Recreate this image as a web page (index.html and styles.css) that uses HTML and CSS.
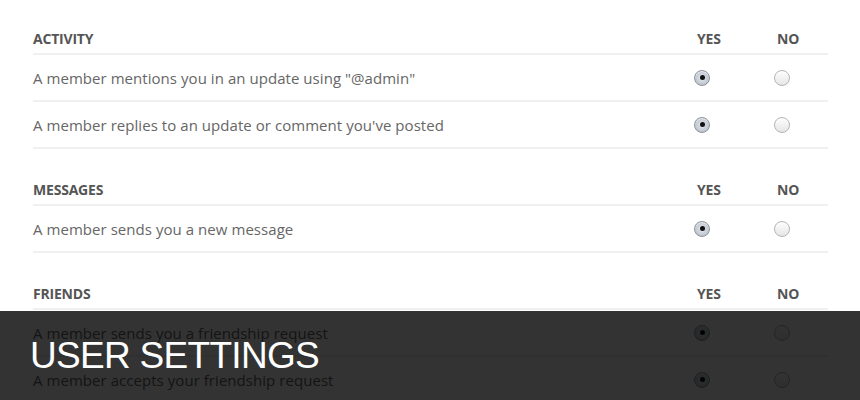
FILE: index.html
```html
<!DOCTYPE html>
<html>
<head>
<meta charset="utf-8">
<link rel="stylesheet" href="styles.css">
</head>
<body>
<div class="page">
  <section class="group">
    <div class="row head"><div class="label">Activity</div><div class="col">Yes</div><div class="col">No</div></div>
    <div class="row"><div class="label">A member mentions you in an update using "@admin"</div><div class="cell"><span class="radio on"></span></div><div class="cell"><span class="radio"></span></div></div>
    <div class="row"><div class="label">A member replies to an update or comment you've posted</div><div class="cell"><span class="radio on"></span></div><div class="cell"><span class="radio"></span></div></div>
  </section>
  <section class="group">
    <div class="row head"><div class="label">Messages</div><div class="col">Yes</div><div class="col">No</div></div>
    <div class="row"><div class="label">A member sends you a new message</div><div class="cell"><span class="radio on"></span></div><div class="cell"><span class="radio"></span></div></div>
  </section>
  <section class="group">
    <div class="row head"><div class="label">Friends</div><div class="col">Yes</div><div class="col">No</div></div>
    <div class="row"><div class="label">A member sends you a friendship request</div><div class="cell"><span class="radio on"></span></div><div class="cell"><span class="radio"></span></div></div>
    <div class="row"><div class="label">A member accepts your friendship request</div><div class="cell"><span class="radio on"></span></div><div class="cell"><span class="radio"></span></div></div>
  </section>
</div>
<div class="caption">USER SETTINGS</div>
</body>
</html>
```
FILE: styles.css
```css
html, body {
  margin: 0;
  padding: 0;
  background: #fff;
  width: 860px;
  height: 400px;
  overflow: hidden;
}
body {
  position: relative;
  font-family: "Open Sans", "DejaVu Sans", sans-serif;
}
.page {
  padding: 22px 0 0 33px;
  width: 795px;
  display: flex;
  flex-direction: column;
  gap: 24px;
}
.row {
  display: grid;
  grid-template-columns: 661px 80px 54px;
  align-items: center;
  height: 47px;
  border-bottom: 2px solid #f0f0f0;
  box-sizing: border-box;
  color: #666;
  font-size: 15px;
  letter-spacing: 0.05px;
}
.row.head {
  height: 33px;
  padding-top: 2px;
  font-size: 14px;
  font-weight: 700;
  text-transform: uppercase;
  color: #555;
  letter-spacing: -0.2px;
}
.col {
  padding-left: 3px;
}
.cell {
  display: flex;
  align-items: center;
}
.radio {
  width: 16px;
  height: 16px;
  box-sizing: border-box;
  border-radius: 50%;
  border: 1px solid #b4b4b4;
  background: linear-gradient(#fdfdfd, #e6e6e6);
  box-shadow: inset 0 1px 1px rgba(255,255,255,0.8);
  display: flex;
  align-items: center;
  justify-content: center;
}
.radio.on {
  border-color: #8e949c;
  background: radial-gradient(circle at 50% 50%, #e8ecf1 0, #c3c9d2 60%, #a9b0ba 100%);
}
.radio.on::after {
  content: "";
  width: 5px;
  height: 5px;
  border-radius: 50%;
  background: #111;
}
.caption {
  position: absolute;
  left: 0;
  top: 311px;
  width: 860px;
  height: 89px;
  background: rgba(0,0,0,0.8);
  color: #fff;
  font-family: "Liberation Sans", Arial, sans-serif;
  font-size: 37px;
  letter-spacing: -0.7px;
  line-height: 89px;
  padding-left: 30px;
  box-sizing: border-box;
}
```
